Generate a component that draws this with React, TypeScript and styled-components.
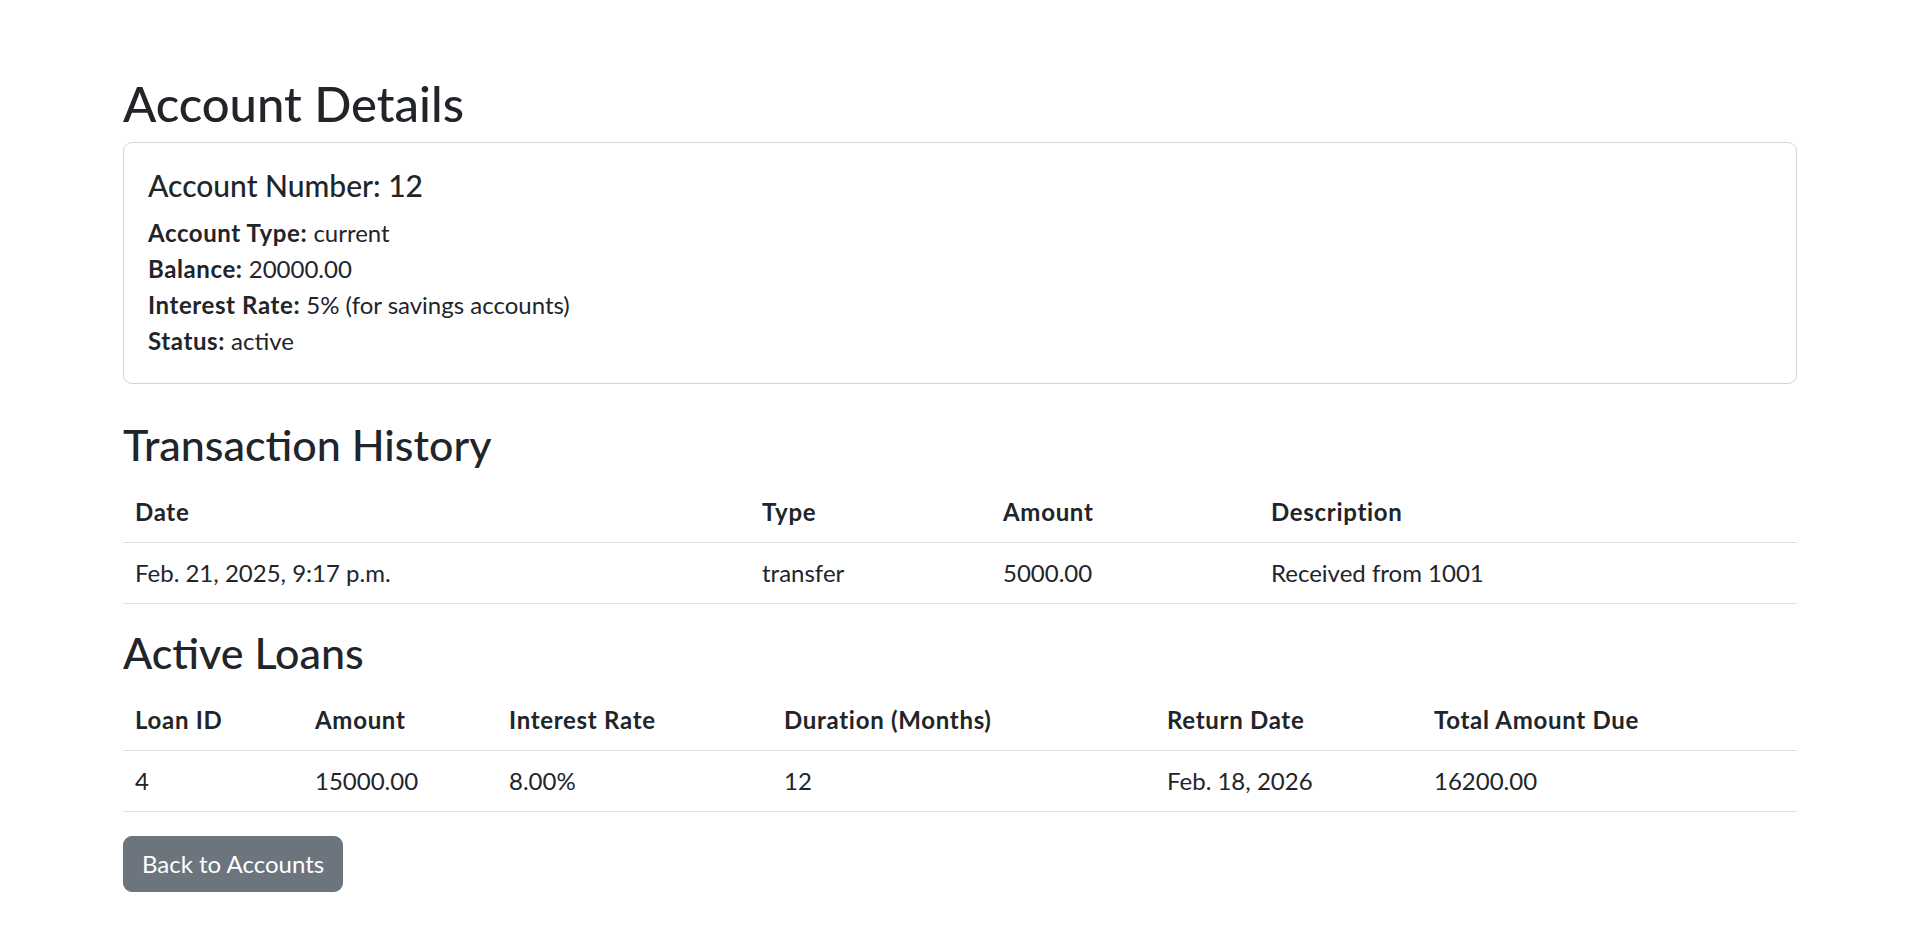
import React from "react";
import styled, { createGlobalStyle } from "styled-components";

const GlobalStyle = createGlobalStyle`
  *, *::before, *::after { box-sizing: border-box; }
  html, body { margin: 0; padding: 0; background: #ffffff; }
  body {
    font-family: "Lato", "Open Sans", "Liberation Sans", sans-serif;
    font-size: 24px;
    line-height: 36px;
    color: #212529;
  }
`;

const Page = styled.main`
  max-width: 1710px;
  margin: 0 auto;
  padding: 72px 18px 40px;
`;

const PageTitle = styled.h1`
  margin: 0 0 8px;
  font-size: 49px;
  line-height: 62px;
  font-weight: 500;
`;

const Card = styled.section`
  border: 1px solid #d3d4d5;
  border-radius: 9px;
  margin-bottom: 36px;
`;

const CardBody = styled.div`
  padding: 24px;
`;

const CardTitle = styled.h5`
  margin: 0 0 12px;
  font-size: 30px;
  line-height: 36px;
  font-weight: 500;
`;

const InfoLine = styled.p`
  margin: 0;
  font-size: 24px;
  line-height: 36px;
`;

const Label = styled.strong`
  font-weight: 700;
  letter-spacing: 0.6px;
`;

const SectionTitle = styled.h3`
  margin: 0 0 12px;
  font-size: 43px;
  line-height: 50px;
  font-weight: 500;
`;

const Table = styled.table`
  width: 100%;
  table-layout: fixed;
  border-collapse: collapse;
  margin-bottom: 24px;
`;

const Col = styled.col<{ $w: number }>`
  width: ${(p) => p.$w}px;
`;

const Th = styled.th`
  text-align: left;
  font-weight: 700;
  letter-spacing: 0.7px;
  padding: 12px;
  line-height: 36px;
  border-bottom: 1px solid #dee2e6;
  vertical-align: bottom;
`;

const Td = styled.td`
  padding: 12px;
  line-height: 36px;
  border-bottom: 1px solid #dee2e6;
`;

const BackButton = styled.a`
  display: inline-block;
  padding: 9px 18px;
  font-size: 24px;
  line-height: 36px;
  color: #ffffff;
  background: #6c757d;
  border: 1px solid #6c757d;
  border-radius: 9px;
  text-decoration: none;
  cursor: pointer;
`;

const txCols = [627, 241, 268, 538];
const loanCols = [180, 194, 275, 383, 267, 375];

export default function App() {
  return (
    <>
      <GlobalStyle />
      <Page>
        <PageTitle>Account Details</PageTitle>
        <Card>
          <CardBody>
            <CardTitle>Account Number: 12</CardTitle>
            <InfoLine>
              <Label>Account Type:</Label> current
            </InfoLine>
            <InfoLine>
              <Label>Balance:</Label> 20000.00
            </InfoLine>
            <InfoLine>
              <Label>Interest Rate:</Label> 5% (for savings accounts)
            </InfoLine>
            <InfoLine>
              <Label>Status:</Label> active
            </InfoLine>
          </CardBody>
        </Card>

        <SectionTitle>Transaction History</SectionTitle>
        <Table>
          <colgroup>
            {txCols.map((w, i) => (
              <Col key={i} $w={w} />
            ))}
          </colgroup>
          <thead>
            <tr>
              <Th>Date</Th>
              <Th>Type</Th>
              <Th>Amount</Th>
              <Th>Description</Th>
            </tr>
          </thead>
          <tbody>
            <tr>
              <Td>Feb. 21, 2025, 9:17 p.m.</Td>
              <Td>transfer</Td>
              <Td>5000.00</Td>
              <Td>Received from 1001</Td>
            </tr>
          </tbody>
        </Table>

        <SectionTitle>Active Loans</SectionTitle>
        <Table>
          <colgroup>
            {loanCols.map((w, i) => (
              <Col key={i} $w={w} />
            ))}
          </colgroup>
          <thead>
            <tr>
              <Th>Loan ID</Th>
              <Th>Amount</Th>
              <Th>Interest Rate</Th>
              <Th>Duration (Months)</Th>
              <Th>Return Date</Th>
              <Th>Total Amount Due</Th>
            </tr>
          </thead>
          <tbody>
            <tr>
              <Td>4</Td>
              <Td>15000.00</Td>
              <Td>8.00%</Td>
              <Td>12</Td>
              <Td>Feb. 18, 2026</Td>
              <Td>16200.00</Td>
            </tr>
          </tbody>
        </Table>

        <BackButton href="#">Back to Accounts</BackButton>
      </Page>
    </>
  );
}
